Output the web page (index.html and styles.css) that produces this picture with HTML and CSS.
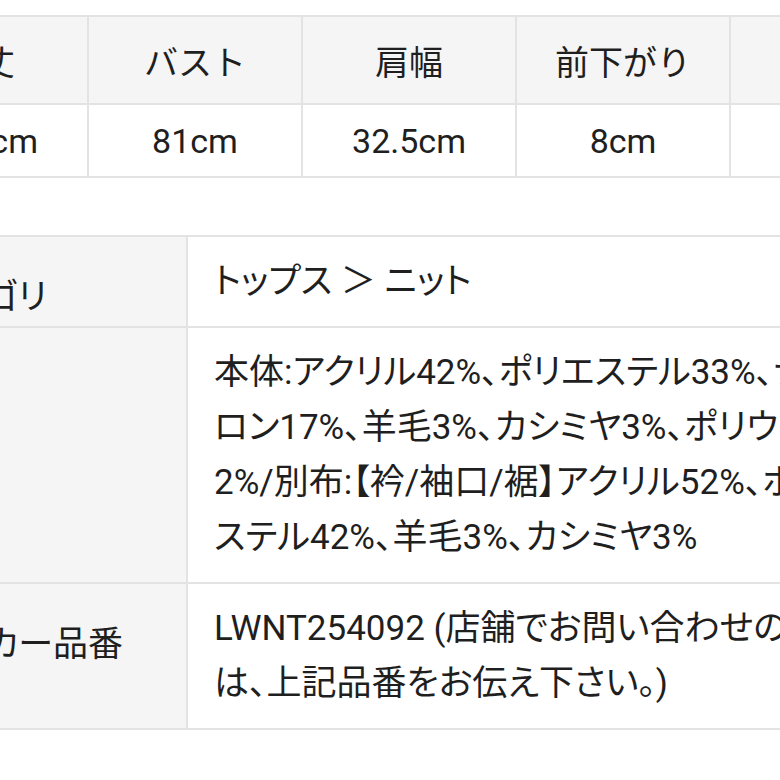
FILE: index.html
```html
<!DOCTYPE html>
<html lang="ja">
<head>
<meta charset="utf-8">
<title>サイズ・商品情報</title>
<link rel="stylesheet" href="styles.css">
</head>
<body>
<div class="page">
  <div class="size-table">
    <div class="cell head">着丈</div>
    <div class="cell head">バスト</div>
    <div class="cell head">肩幅</div>
    <div class="cell head">前下がり</div>
    <div class="cell head">袖丈</div>
    <div class="cell">60.5cm</div>
    <div class="cell">81cm</div>
    <div class="cell">32.5cm</div>
    <div class="cell">8cm</div>
    <div class="cell">77cm</div>
  </div>

  <div class="spec-table">
    <div class="label">カテゴリ</div>
    <div class="value">トップス ＞ ニット</div>

    <div class="label">素材</div>
    <div class="value">本体:アクリル42%、ポリエステル33%、ナイ<br>ロン17%、羊毛3%、カシミヤ3%、ポリウレタン<br>2%/別布:【衿/袖口/裾】アクリル52%、ポリエ<br>ステル42%、羊毛3%、カシミヤ3%</div>

    <div class="label">メーカー品番</div>
    <div class="value">LWNT254092 (店舗でお問い合わせの際<br>は、上記品番をお伝え下さい。)</div>
  </div>
</div>
</body>
</html>
```

FILE: styles.css
```css
html, body {
  margin: 0;
  padding: 0;
  background: #ffffff;
}

body {
  font-family: Roboto, "Noto Sans CJK JP", sans-serif;
  font-size: 34px;
  color: #1f1f1f;
}

.page {
  width: 780px;
  height: 780px;
  overflow: hidden;
  padding-top: 15px;
  box-sizing: border-box;
}

.size-table {
  display: grid;
  grid-template-columns: repeat(5, 212px);
  grid-template-rows: 86px 71px;
  gap: 2px;
  width: max-content;
  margin-left: -125px;
  background: #e3e3e3;
  border-top: 2px solid #e3e3e3;
  border-bottom: 2px solid #e3e3e3;
}

.cell {
  display: flex;
  align-items: center;
  justify-content: center;
  background: #ffffff;
  white-space: nowrap;
}

.head {
  background: #f5f5f5;
}

.spec-table {
  display: grid;
  grid-template-columns: 294px 720px;
  gap: 2px;
  width: max-content;
  margin-top: 57px;
  margin-left: -108px;
  background: #e3e3e3;
  border-top: 2px solid #e3e3e3;
  border-bottom: 2px solid #e3e3e3;
  font-size: 35px;
  font-feature-settings: "palt";
}

.label {
  background: #f5f5f5;
  padding: 33px 0 0 29px;
  line-height: 55px;
  white-space: nowrap;
}

.value {
  background: #ffffff;
  padding: 17px 0 17px 26px;
  line-height: 55px;
  white-space: nowrap;
}
```
